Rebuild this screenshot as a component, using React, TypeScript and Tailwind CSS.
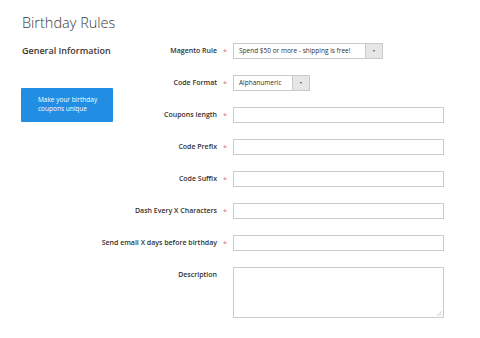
import React from "react";

const FONT = { fontFamily: '"Open Sans", "Liberation Sans", sans-serif' };

function Label({ text, required = true }: { text: string; required?: boolean }) {
  return (
    <div className="flex h-[16px] shrink-0 items-center">
      <div className="flex w-[104px] justify-end">
        <span className="whitespace-nowrap text-[7px] font-semibold text-[#303030]">{text}</span>
      </div>
      <div className="flex w-[16px] justify-center">
        {required && <span className="text-[7px] leading-none text-[#e46a6a]">*</span>}
      </div>
    </div>
  );
}

function Select({ value, width }: { value: string; width: string }) {
  return (
    <div className={`flex h-[16px] ${width} border border-[#c9c9c9] bg-white`}>
      <div className="flex flex-1 items-center pl-[5px] text-[6.5px] text-[#303030] whitespace-nowrap">{value}</div>
      <div className="flex w-[17px] items-center justify-center border-l border-[#c9c9c9] bg-[#e6e6e6]">
        <span className="h-0 w-0 border-x-[1.5px] border-t-[2px] border-x-transparent border-t-[#555]" />
      </div>
    </div>
  );
}

function TextInput() {
  return <div className="h-[16px] w-[211px] border border-[#cccccc] bg-white" />;
}

const FIELDS = ["Coupons length", "Code Prefix", "Code Suffix", "Dash Every X Characters", "Send email X days before birthday"];

export default function App() {
  return (
    <div className="h-[338px] w-[480px] overflow-hidden bg-white px-[21px] pt-[13px]" style={FONT}>
      <h1 className="ml-[1px] text-[14.5px] font-light leading-[20px] text-[#3a3a3a]">Birthday Rules</h1>
      <div className="mt-[10px] flex">
        <div className="w-[92px] shrink-0">
          <h2 className="mt-[2px] ml-[1px] whitespace-nowrap text-[9px] font-semibold leading-[12px] text-[#41362f]">
            General Information
          </h2>
          <div className="mt-[31px] h-[34px] w-[92px] rounded-[1px] bg-[#218de3] pl-[17px] pt-[8px] text-[6.5px] leading-[8.5px] text-white">
            Make your birthday
            <br />
            coupons unique
          </div>
        </div>
        <div className="flex flex-col gap-[16px]">
          <div className="flex">
            <Label text="Magento Rule" />
            <Select value="Spend $50 or more - shipping is free!" width="w-[150px]" />
          </div>
          <div className="flex">
            <Label text="Code Format" />
            <Select value="Alphanumeric" width="w-[77px]" />
          </div>
          {FIELDS.map((f) => (
            <div key={f} className="flex">
              <Label text={f} />
              <TextInput />
            </div>
          ))}
          <div className="flex">
            <Label text="Description" required={false} />
            <div className="relative h-[51px] w-[211px] border border-[#cccccc] bg-white">
              <svg className="absolute bottom-[1px] right-[1px]" width="5" height="5" viewBox="0 0 5 5">
                <path d="M5 0L0 5M5 2.5L2.5 5" stroke="#aaa" strokeWidth="0.6" />
              </svg>
            </div>
          </div>
        </div>
      </div>
    </div>
  );
}
